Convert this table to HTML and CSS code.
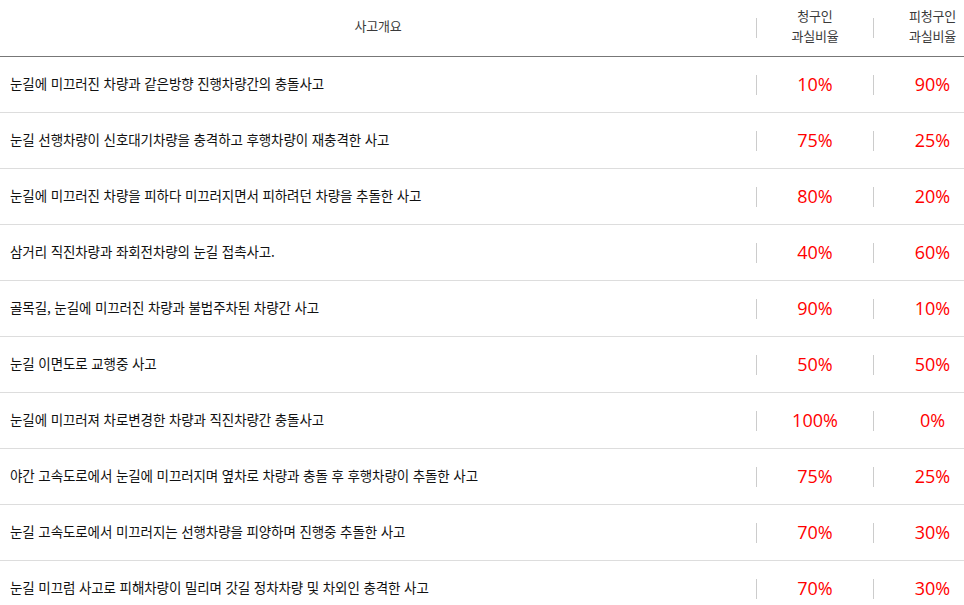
FILE: index.html
```html
<!DOCTYPE html>
<html lang="ko">
<head>
<meta charset="utf-8">
<link rel="stylesheet" href="styles.css">
</head>
<body>
<div class="table">
  <div class="row head">
    <div class="cell desc">사고개요</div>
    <span class="sep"></span>
    <div class="cell rate">청구인<br>과실비율</div>
    <span class="sep"></span>
    <div class="cell rate">피청구인<br>과실비율</div>
  </div>
  <div class="row">
    <div class="cell text">눈길에 미끄러진 차량과 같은방향 진행차량간의 충돌사고</div>
    <span class="sep"></span><div class="cell pct">10%</div>
    <span class="sep"></span><div class="cell pct">90%</div>
  </div>
  <div class="row">
    <div class="cell text">눈길 선행차량이 신호대기차량을 충격하고 후행차량이 재충격한 사고</div>
    <span class="sep"></span><div class="cell pct">75%</div>
    <span class="sep"></span><div class="cell pct">25%</div>
  </div>
  <div class="row">
    <div class="cell text">눈길에 미끄러진 차량을 피하다 미끄러지면서 피하려던 차량을 추돌한 사고</div>
    <span class="sep"></span><div class="cell pct">80%</div>
    <span class="sep"></span><div class="cell pct">20%</div>
  </div>
  <div class="row">
    <div class="cell text">삼거리 직진차량과 좌회전차량의 눈길 접촉사고.</div>
    <span class="sep"></span><div class="cell pct">40%</div>
    <span class="sep"></span><div class="cell pct">60%</div>
  </div>
  <div class="row">
    <div class="cell text">골목길, 눈길에 미끄러진 차량과 불법주차된 차량간 사고</div>
    <span class="sep"></span><div class="cell pct">90%</div>
    <span class="sep"></span><div class="cell pct">10%</div>
  </div>
  <div class="row">
    <div class="cell text">눈길 이면도로 교행중 사고</div>
    <span class="sep"></span><div class="cell pct">50%</div>
    <span class="sep"></span><div class="cell pct">50%</div>
  </div>
  <div class="row">
    <div class="cell text">눈길에 미끄러져 차로변경한 차량과 직진차량간 충돌사고</div>
    <span class="sep"></span><div class="cell pct">100%</div>
    <span class="sep"></span><div class="cell pct">0%</div>
  </div>
  <div class="row">
    <div class="cell text">야간 고속도로에서 눈길에 미끄러지며 옆차로 차량과 충돌 후 후행차량이 추돌한 사고</div>
    <span class="sep"></span><div class="cell pct">75%</div>
    <span class="sep"></span><div class="cell pct">25%</div>
  </div>
  <div class="row">
    <div class="cell text">눈길 고속도로에서 미끄러지는 선행차량을 피양하며 진행중 추돌한 사고</div>
    <span class="sep"></span><div class="cell pct">70%</div>
    <span class="sep"></span><div class="cell pct">30%</div>
  </div>
  <div class="row">
    <div class="cell text">눈길 미끄럼 사고로 피해차량이 밀리며 갓길 정차차량 및 차외인 충격한 사고</div>
    <span class="sep"></span><div class="cell pct">70%</div>
    <span class="sep"></span><div class="cell pct">30%</div>
  </div>
</div>
</body>
</html>
```
FILE: styles.css
```css
html, body {
  margin: 0;
  padding: 0;
  background: #fff;
  overflow: hidden;
}
body {
  font-family: "Noto Sans CJK KR", "Noto Sans", sans-serif;
  width: 964px;
}
.table {
  width: 991px;
}
.row {
  display: grid;
  grid-template-columns: 756px 1px 116px 1px 117px;
  height: 55px;
  border-bottom: 1px solid #dddddd;
}
.row.head {
  height: 56px;
  border-bottom: 1px solid #777777;
}
.sep {
  align-self: center;
  height: 20px;
  background: #cccccc;
}
.cell {
  display: flex;
  align-items: center;
}
.head .cell {
  justify-content: center;
  text-align: center;
  font-size: 13px;
  line-height: 20px;
  color: #3a3a3a;
  letter-spacing: -0.2px;
  padding-bottom: 5px;
}
.text {
  padding-left: 10px;
  padding-bottom: 4px;
  font-size: 13.5px;
  color: #111;
  letter-spacing: -0.1px;
}
.pct {
  justify-content: center;
  padding-bottom: 2px;
  font-family: "Open Sans", "Noto Sans", sans-serif;
  font-size: 18px;
  color: #ff0000;
}
```
